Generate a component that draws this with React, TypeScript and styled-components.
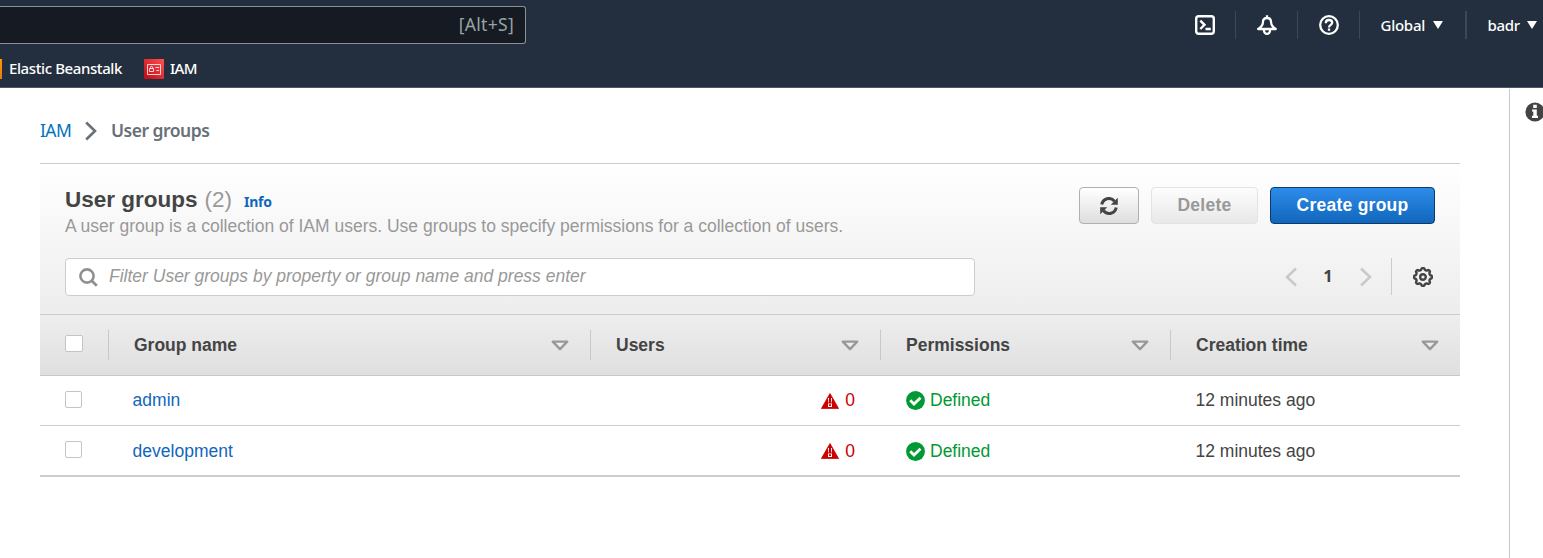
import React from "react";
import styled, { createGlobalStyle } from "styled-components";

const GlobalStyle = createGlobalStyle`
  * { box-sizing: border-box; }
  body {
    margin: 0;
    background: #fff;
    color: #444;
    font-family: "Liberation Sans", Arial, sans-serif;
    font-size: 17.5px;
    overflow: hidden;
  }
  svg { display: block; flex: none; }
`;

const ember = `"Noto Sans", "Open Sans", sans-serif`;

const Page = styled.div`
  height: 558px;
  display: flex;
  flex-direction: column;
  overflow: hidden;
`;

const NavHeader = styled.header`
  height: 88px;
  flex: none;
  background: #232f3e;
  border-bottom: 1px solid #4b5563;
  font-family: ${ember};
  color: #fff;
`;

const NavRow = styled.div`
  height: 50px;
  display: flex;
  justify-content: space-between;
`;

const NavSearch = styled.div`
  width: 526px;
  height: 38px;
  margin-top: 6px;
  padding: 0 11px 2px 0;
  display: flex;
  align-items: center;
  justify-content: flex-end;
  background: #161a22;
  border: 1px solid #879196;
  border-left: 0;
  border-radius: 0 3px 3px 0;
  color: #95a5a6;
  font-size: 17.5px;
  letter-spacing: 0.3px;
`;

const NavTools = styled.div`
  display: flex;
  height: 28px;
  margin-top: 11px;
`;

const NavTool = styled.div<{ $width: number; $divider?: number }>`
  width: ${(p) => p.$width}px;
  display: flex;
  align-items: center;
  justify-content: center;
  border-right: ${(p) => p.$divider ?? 1}px solid #414750;
`;

const NavMenu = styled(NavTool)<{ $spacing: number }>`
  justify-content: flex-start;
  padding: 0 0 1px 20.5px;
  gap: 7.5px;
  font-size: 15px;
  font-weight: 500;
  letter-spacing: ${(p) => p.$spacing}px;
`;

const Favorites = styled.div`
  display: flex;
  align-items: center;
  height: 37px;
  font-size: 15px;
  font-weight: 500;
`;

const BeanstalkBadge = styled.span`
  width: 2px;
  height: 20px;
  margin-right: 7px;
  background: linear-gradient(#f90, #e77d10);
`;

const Favorite = styled.span<{ $width: number; $spacing: number; $indent?: number }>`
  width: ${(p) => p.$width}px;
  margin-left: ${(p) => p.$indent ?? 0}px;
  padding-bottom: 2px;
  white-space: nowrap;
  letter-spacing: ${(p) => p.$spacing}px;
`;

const Body = styled.div`
  display: flex;
  flex: 1;
  min-height: 0;
`;

const Content = styled.main`
  width: 1509px;
  flex: none;
  padding: 0 49px 0 40px;
`;

const HelpRail = styled.aside`
  flex: 1;
  margin-top: 1px;
  border-left: 1px solid #c3cccc;
  padding: 13px 0 0 15px;
`;

const Breadcrumbs = styled.nav`
  display: flex;
  align-items: center;
  height: 54px;
  padding-top: 31px;
  margin-bottom: 21px;
  font-family: ${ember};
  font-size: 17.5px;
  color: #687078;
  line-height: 24px;
`;

const CrumbLink = styled.a`
  color: #0073bb;
  width: 45px;
  padding-bottom: 1px;
  letter-spacing: -0.6px;
`;

const CrumbCurrent = styled.span`
  margin-left: 14px;
  padding-bottom: 1px;
  font-weight: 600;
  letter-spacing: -0.5px;
`;

const Panel = styled.section`
  height: 152px;
  border-top: 1px solid #ccc;
  border-bottom: 1px solid #ccc;
  background: linear-gradient(#fff, #ededed);
  padding: 23px 25px 0;
`;

const Spread = styled.div`
  display: flex;
  justify-content: space-between;
`;

const TitleBlock = styled.div`
  height: 71px;
`;

const Title = styled.h1`
  margin: -1px 0 0;
  height: 28px;
  line-height: 28px;
  font-size: 22.5px;
  display: flex;
  align-items: baseline;
`;

const Count = styled.span`
  margin-left: 7px;
  font-weight: 400;
  color: #999;
`;

const InfoLink = styled.a`
  margin-left: 12px;
  color: #1166bb;
  font-family: ${ember};
  font-size: 14px;
  font-weight: 700;
  letter-spacing: -0.25px;
`;

const Description = styled.p`
  margin: 0;
  line-height: 24px;
  color: #999;
`;

const Actions = styled.div`
  display: flex;
  gap: 12px;
`;

const Button = styled.button<{ $width: number; $kind?: "primary" | "disabled" }>`
  width: ${(p) => p.$width}px;
  height: 37px;
  padding: 0 0 1px;
  display: flex;
  align-items: center;
  justify-content: center;
  font: bold 17.5px "Liberation Sans", Arial, sans-serif;
  letter-spacing: ${(p) => (p.$kind ? 0.25 : 0)}px;
  border-radius: 4px;
  border: 1px solid
    ${(p) => (p.$kind === "primary" ? "#0b3a6b" : p.$kind === "disabled" ? "#e3e3e3" : "#b0b0b0")};
  color: ${(p) => (p.$kind === "primary" ? "#fff" : p.$kind === "disabled" ? "#999" : "#444")};
  background: ${(p) =>
    p.$kind === "primary"
      ? "linear-gradient(#2d8cea, #1166bb)"
      : p.$kind === "disabled"
        ? "linear-gradient(#fdfdfd, #e8e8e8)"
        : "linear-gradient(#fff, #dedede)"};
`;

const RefreshMark = styled.span`
  padding-top: 2px;
`;

const Filter = styled.div`
  width: 910px;
  height: 38px;
  display: flex;
  align-items: center;
  padding: 0 0 2px 13px;
  gap: 11px;
  background: #fff;
  border: 1px solid #ccc;
  border-radius: 4px;
  font-style: italic;
  color: #999;
`;

const SearchMark = styled.span`
  padding-top: 2px;
`;

const Pager = styled.div`
  display: flex;
  align-items: center;
  height: 37px;
`;

const PageNumber = styled.span`
  width: 63px;
  padding: 0 1px 2px 0;
  text-align: center;
  font: 700 16.5px ${ember};
`;

const Settings = styled.div`
  height: 37px;
  margin-left: 19px;
  padding: 1px 2px 0 21px;
  border-left: 1px solid #ccc;
  display: flex;
  align-items: center;
`;

const columns = "69px 482px 290px 290px 289px";

const TableHead = styled.div`
  display: grid;
  grid-template-columns: ${columns};
  height: 61px;
  padding: 15px 0;
  background: linear-gradient(#eee, #dfdfdf);
  border-bottom: 1px solid #c8c8c8;
`;

const HeadCell = styled.div`
  display: flex;
  align-items: center;
  justify-content: space-between;
  padding: 0 21px 0 25px;
  border-right: 1px solid #c8c8c8;
  font-weight: 700;
  &:last-child { border-right: 0; }
`;

const SelectHead = styled.div`
  padding: 5px 0 0 25px;
  border-right: 1px solid #c8c8c8;
`;

const TableRow = styled.div<{ $last?: boolean }>`
  display: grid;
  grid-template-columns: ${columns};
  height: ${(p) => (p.$last ? 51 : 50)}px;
  line-height: 20px;
  border-bottom: ${(p) => (p.$last ? 2 : 1)}px solid #ccc;
`;

const Cell = styled.div<{ $color?: string; $end?: boolean; $gap?: number; $low?: boolean; $left?: number }>`
  display: flex;
  align-items: center;
  justify-content: ${(p) => (p.$end ? "flex-end" : "flex-start")};
  gap: ${(p) => p.$gap ?? 0}px;
  padding: ${(p) => (p.$low ? 1 : 0)}px 26px ${(p) => (p.$low ? 0 : 2)}px ${(p) => p.$left ?? 24.5}px;
  color: ${(p) => p.$color ?? "#444"};
`;

const Checkbox = styled.span<{ $width?: number }>`
  display: block;
  width: ${(p) => p.$width ?? 17}px;
  height: 17px;
  background: #fff;
  border: 1px solid #c4c4c4;
  border-radius: 2px;
`;

const SelectCell = styled.div`
  padding: 15px 0 0 25px;
`;

const IconDrop = styled.span<{ $low?: boolean }>`
  padding-top: ${(p) => (p.$low ? 0 : 2)}px;
`;

const Caret = () => (
  <svg width="10" height="8" viewBox="0 0 10 8">
    <path d="M0 0h10L5 8z" fill="#fff" />
  </svg>
);

const SortIcon = () => (
  <svg width="18" height="11" viewBox="0 0 18 11">
    <path d="M1.8 1.6h14.4L9 9.2z" fill="#eee" stroke="#999" strokeWidth="2.4" strokeLinejoin="round" />
  </svg>
);

const Chevron = ({ d }: { d: string }) => (
  <svg width="12" height="20" viewBox="0 0 12 20">
    <path d={d} fill="none" stroke="#c9c9c9" strokeWidth="2.6" />
  </svg>
);

const Warning = () => (
  <svg width="18" height="16" viewBox="0 0 18 16">
    <path d="M9 .5 17.6 15.6H.4z" fill="#c00" stroke="#c00" strokeWidth="0.8" strokeLinejoin="round" />
    <path d="M7 5h4l-.3 4.6H7.3zM7 10.6h4v3.4H7z" fill="#fff" />
    <path d="M8 5h2v5H8zM8 11.2h2v1.9H8z" fill="#c00" />
  </svg>
);

const CheckCircle = () => (
  <svg width="19" height="19" viewBox="0 0 19 19">
    <circle cx="9.5" cy="9.5" r="9.4" fill="#093" />
    <path d="M4.2 9.2 8 13l6.5-6.3" fill="none" stroke="#fff" strokeWidth="2.8" />
  </svg>
);

const Gear = () => {
  const points: string[] = [];
  for (let i = 0; i <= 96; i++) {
    const a = (i / 96) * Math.PI * 2;
    const r = 8.1 + 0.9 * Math.tanh(2 * Math.cos(8 * a));
    points.push(`${(10 + r * Math.sin(a)).toFixed(2)} ${(10 - r * Math.cos(a)).toFixed(2)}`);
  }
  return (
    <svg width="20" height="20" viewBox="0 0 20 20" fill="none" stroke="#444">
      <path d={`M${points.join("L")}Z`} strokeWidth="2.4" strokeLinejoin="round" />
      <circle cx="10" cy="10" r="2.8" strokeWidth="2.4" />
    </svg>
  );
};

const groups = [
  { name: "admin", users: 0, permissions: "Defined", created: "12 minutes ago" },
  { name: "development", users: 0, permissions: "Defined", created: "12 minutes ago" },
];

export default function App() {
  return (
    <Page>
      <GlobalStyle />
      <NavHeader>
        <NavRow>
          <NavSearch>[Alt+S]</NavSearch>
          <NavTools>
            <NavTool $width={61}>
              <svg width="20" height="20" viewBox="0 0 20 20" fill="none" stroke="#fff" strokeWidth="2.4">
                <rect x="1.2" y="1.2" width="17.6" height="17.6" rx="2.5" />
                <path d="m5.3 5.6 4.2 4.2L5.3 14M10.5 14h5.3" />
              </svg>
            </NavTool>
            <NavTool $width={62}>
              <svg width="20" height="20" viewBox="0 0 20 20" fill="none" stroke="#fff" strokeWidth="2.3" strokeLinejoin="round">
                <path d="M10 3C7.2 3 5.9 4.8 5.9 7.4c0 3.2-1.8 4.6-4.7 6.6h17.6c-2.9-2-4.7-3.4-4.7-6.6C14.1 4.8 12.8 3 10 3zM10 .2v2.5M7 14v1.8a3 3 0 0 0 6 0V14" />
              </svg>
            </NavTool>
            <NavTool $width={62}>
              <svg width="20" height="20" viewBox="0 0 20 20" fill="none" stroke="#fff" strokeWidth="2.3">
                <circle cx="10" cy="10" r="8.8" />
                <path d="M6.8 8.2V7.9C6.8 6 8.2 5 10 5s3.2 1 3.2 2.7c0 2.2-3.2 2.2-3.2 4.7M10 13.5v2.3" />
              </svg>
            </NavTool>
            <NavMenu $width={107} $divider={2} $spacing={-0.25}>
              Global <Caret />
            </NavMenu>
            <NavMenu $width={76} $divider={0} $spacing={-0.3}>
              badr <Caret />
            </NavMenu>
          </NavTools>
        </NavRow>
        <Favorites>
          <BeanstalkBadge />
          <Favorite $width={135} $spacing={-0.4}>Elastic Beanstalk</Favorite>
          <svg width="20" height="20" viewBox="0 0 20 20">
            <defs>
              <linearGradient id="iam" x1="0" y1="1" x2="1" y2="0">
                <stop stopColor="#bd0816" />
                <stop offset="1" stopColor="#ff5252" />
              </linearGradient>
            </defs>
            <path fill="url(#iam)" d="M0 0h20v20H0z" />
            <g fill="none" stroke="#fff" strokeWidth=".8">
              <path d="M3.5 5.5h13v10h-13zM5.5 9.5h4v3h-4zM6.5 9.5V8.3a1 1 0 0 1 2 0v1.2M11.5 8.5h3.5M12.5 11.5H15" />
            </g>
          </svg>
          <Favorite $width={60} $spacing={-0.7} $indent={6}>IAM</Favorite>
        </Favorites>
      </NavHeader>
      <Body>
        <Content>
          <Breadcrumbs>
            <CrumbLink>IAM</CrumbLink>
            <svg width="12" height="20" viewBox="0 0 12 20">
              <path d="m1.2 1.5 8.8 8.5-8.8 8.5" fill="none" stroke="#687078" strokeWidth="2.6" />
            </svg>
            <CrumbCurrent>User groups</CrumbCurrent>
          </Breadcrumbs>
          <Panel>
            <Spread>
              <TitleBlock>
                <Title>
                  User groups <Count>(2)</Count>
                  <InfoLink>Info</InfoLink>
                </Title>
                <Description>
                  A user group is a collection of IAM users. Use groups to specify permissions for a collection of users.
                </Description>
              </TitleBlock>
              <Actions>
                <Button $width={60} aria-label="Refresh">
                  <RefreshMark>
                    <svg width="18" height="18" viewBox="0 0 18 18">
                      <path d="M1.8 7.6A7.2 7.2 0 0 1 14.5 4.2M16.2 10.4A7.2 7.2 0 0 1 3.5 13.8" fill="none" stroke="#444" strokeWidth="3" />
                      <path d="M17.8 .8v7h-7zM.2 17.2v-7h7z" fill="#444" />
                    </svg>
                  </RefreshMark>
                </Button>
                <Button $width={107} $kind="disabled">Delete</Button>
                <Button $width={165} $kind="primary">Create group</Button>
              </Actions>
            </Spread>
            <Spread>
              <Filter>
                <SearchMark>
                  <svg width="19" height="19" viewBox="0 0 19 19" fill="none" stroke="#909090">
                    <circle cx="8" cy="8" r="6.6" strokeWidth="2.6" />
                    <path d="m12.5 12.5 5.3 5.3" strokeWidth="2.8" />
                  </svg>
                </SearchMark>
                Filter User groups by property or group name and press enter
              </Filter>
              <Pager>
                <Chevron d="M11 1.5 2 10l9 8.5" />
                <PageNumber>1</PageNumber>
                <Chevron d="m1 1.5 9 8.5-9 8.5" />
                <Settings><Gear /></Settings>
              </Pager>
            </Spread>
          </Panel>
          <TableHead>
            <SelectHead><Checkbox $width={18} /></SelectHead>
            {["Group name", "Users", "Permissions", "Creation time"].map((label) => (
              <HeadCell key={label}>{label}<SortIcon /></HeadCell>
            ))}
          </TableHead>
          {groups.map((group, i) => (
            <TableRow key={group.name} $last={i === groups.length - 1}>
              <SelectCell><Checkbox /></SelectCell>
              <Cell $color="#1166bb" $left={23.6} $low={i > 0}>{group.name}</Cell>
              <Cell $color="#c00" $end $gap={6} $low={i > 0}>
                <IconDrop $low={i > 0}><Warning /></IconDrop>{group.users}
              </Cell>
              <Cell $color="#093" $gap={5.5} $low={i > 0}>
                <IconDrop $low={i > 0}><CheckCircle /></IconDrop>{group.permissions}
              </Cell>
              <Cell $low={i > 0}>{group.created}</Cell>
            </TableRow>
          ))}
        </Content>
        <HelpRail>
          <svg width="20" height="20" viewBox="0 0 20 20">
            <circle cx="10" cy="10" r="9.6" fill="#444" />
            <path d="M8.2 2.8h3.6V6H8.2zM7 7.5h4.8v6.2H13V16H7v-2.3h1.3V9.6H7z" fill="#fff" />
          </svg>
        </HelpRail>
      </Body>
    </Page>
  );
}
